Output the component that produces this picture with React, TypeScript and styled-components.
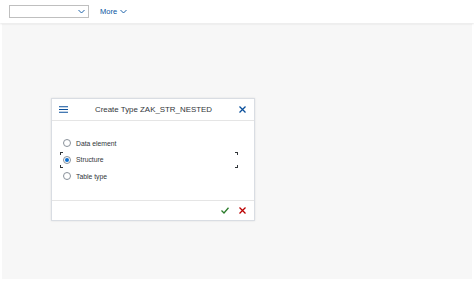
import React from "react";
import styled, { createGlobalStyle } from "styled-components";

const Global = createGlobalStyle`
  html, body { margin: 0; padding: 0; background: #ffffff; }
  body { font-family: "Liberation Sans", Arial, sans-serif; color: #32363a; }
  * { box-sizing: border-box; }
`;

const Page = styled.div`
  width: 474px;
  height: 282px;
  display: flex;
  flex-direction: column;
  background: #ffffff;
`;

const Toolbar = styled.div`
  height: 23px;
  display: flex;
  align-items: center;
  padding: 0 9px;
  gap: 11px;
  background: #ffffff;
  box-shadow: 0 1px 2px rgba(0, 0, 0, 0.1);
  position: relative;
  z-index: 1;
`;

const Select = styled.div`
  width: 80px;
  height: 13px;
  border: 1px solid #bfbfbf;
  background: #fff;
  display: flex;
  align-items: center;
  justify-content: flex-end;
  padding-right: 3px;
`;

const MoreButton = styled.div`
  display: flex;
  align-items: center;
  gap: 3px;
  color: #0854a0;
  font-size: 7.5px;
`;

const Canvas = styled.div`
  flex: 1;
  margin: 1px 2px 3px 2px;
  background: #f7f7f7;
  display: flex;
  align-items: flex-start;
  padding: 74px 0 0 49px;
`;

const Dialog = styled.div`
  width: 204px;
  height: 123px;
  background: #ffffff;
  border: 1px solid #d9dde3;
  box-shadow: 0 0 2px rgba(0, 0, 0, 0.1);
  display: flex;
  flex-direction: column;
`;

const DialogHeader = styled.div`
  height: 22px;
  display: flex;
  align-items: center;
  padding: 0 8px 0 7px;
  border-bottom: 1px solid #e5e5e5;
`;

const Title = styled.div`
  flex: 1;
  text-align: center;
  font-size: 7.9px;
  color: #32363a;
`;

const Body = styled.div`
  flex: 1;
  display: flex;
  flex-direction: column;
  padding: 14px 16px 0 9px;
`;

const Option = styled.div`
  position: relative;
  height: 16.5px;
  display: flex;
  align-items: center;
  gap: 5px;
  padding-left: 2px;
  font-size: 6.8px;
  color: #32363a;
`;

const Radio = styled.span<{ $checked?: boolean }>`
  width: 8px;
  height: 8px;
  border-radius: 50%;
  border: 1px solid #89919a;
  display: flex;
  align-items: center;
  justify-content: center;
  &::after {
    content: "";
    width: 4px;
    height: 4px;
    border-radius: 50%;
    background: ${(p) => (p.$checked ? "#0a6ed1" : "transparent")};
  }
`;

const Corner = styled.span<{ $pos: "tl" | "tr" | "bl" | "br" }>`
  position: absolute;
  width: 3px;
  height: 3px;
  border-color: #32363a;
  border-style: solid;
  border-width: 0;
  ${(p) => (p.$pos[0] === "t" ? "top: 0;" : "bottom: 0;")}
  ${(p) => (p.$pos[1] === "l" ? "left: -1px;" : "right: 0;")}
  ${(p) => (p.$pos[0] === "t" ? "border-top-width: 1px;" : "border-bottom-width: 1px;")}
  ${(p) => (p.$pos[1] === "l" ? "border-left-width: 1px;" : "border-right-width: 1px;")}
`;

const Footer = styled.div`
  height: 20px;
  border-top: 1px solid #e5e5e5;
  display: flex;
  align-items: center;
  justify-content: flex-end;
  gap: 10px;
  padding-right: 8px;
`;

const IconBox = styled.span`
  display: flex;
  align-items: center;
`;

const Chevron = ({ color }: { color: string }) => (
  <svg width="7" height="5" viewBox="0 0 7 5">
    <path d="M0.5 1 L3.5 4 L6.5 1" fill="none" stroke={color} strokeWidth="0.9" />
  </svg>
);

export default function App() {
  return (
    <>
      <Global />
      <Page>
        <Toolbar>
          <Select>
            <Chevron color="#0854a0" />
          </Select>
          <MoreButton>
            More <Chevron color="#0854a0" />
          </MoreButton>
        </Toolbar>
        <Canvas>
          <Dialog>
            <DialogHeader>
              <IconBox>
                <svg width="9" height="7" viewBox="0 0 9 7">
                  <path d="M0 0.75H9M0 3.5H9M0 6.25H9" stroke="#0a4f9b" strokeWidth="1.2" />
                </svg>
              </IconBox>
              <Title>Create Type ZAK_STR_NESTED</Title>
              <IconBox>
                <svg width="7" height="7" viewBox="0 0 7 7">
                  <path d="M0.5 0.5L6.5 6.5M6.5 0.5L0.5 6.5" stroke="#0a4f9b" strokeWidth="1.3" />
                </svg>
              </IconBox>
            </DialogHeader>
            <Body>
              <Option>
                <Radio />
                Data element
              </Option>
              <Option>
                <Corner $pos="tl" />
                <Corner $pos="tr" />
                <Corner $pos="bl" />
                <Corner $pos="br" />
                <Radio $checked />
                Structure
              </Option>
              <Option>
                <Radio />
                Table type
              </Option>
            </Body>
            <Footer>
              <IconBox>
                <svg width="8" height="7" viewBox="0 0 8 7">
                  <path d="M0.5 3.5L3 6L7.5 0.8" fill="none" stroke="#2b7c2b" strokeWidth="1.3" />
                </svg>
              </IconBox>
              <IconBox>
                <svg width="7" height="7" viewBox="0 0 7 7">
                  <path d="M0.5 0.5L6.5 6.5M6.5 0.5L0.5 6.5" stroke="#bb0000" strokeWidth="1.3" />
                </svg>
              </IconBox>
            </Footer>
          </Dialog>
        </Canvas>
      </Page>
    </>
  );
}
